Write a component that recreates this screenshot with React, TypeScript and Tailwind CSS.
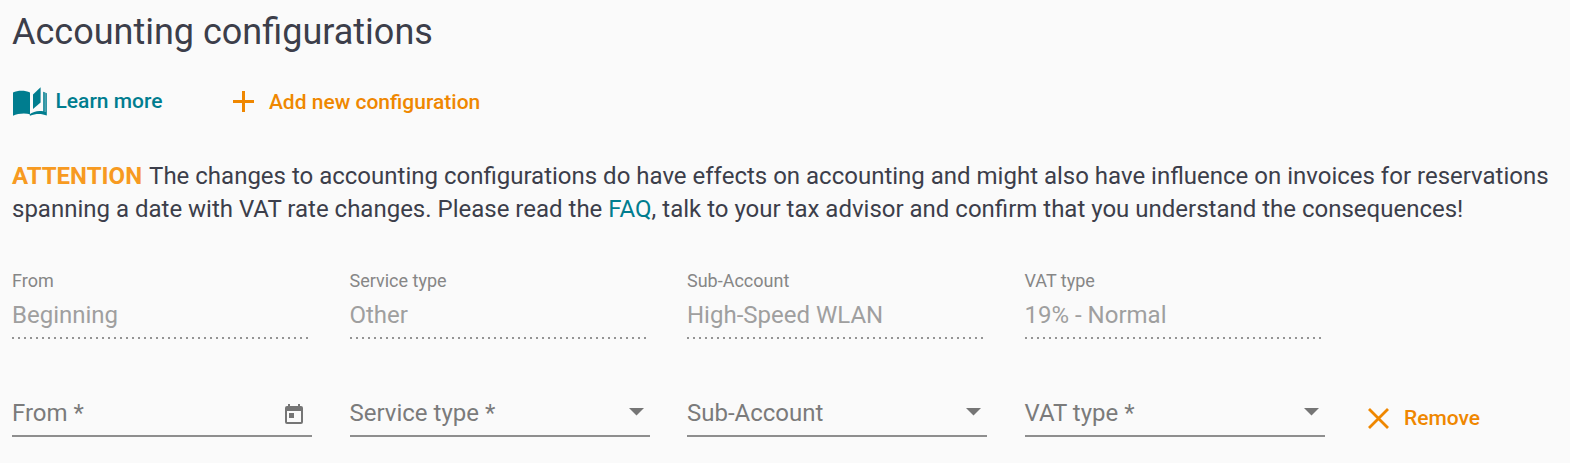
import React from "react";

const fields = [
  { label: "From", value: "Beginning", placeholder: "From *", date: true },
  { label: "Service type", value: "Other", placeholder: "Service type *", date: false },
  { label: "Sub-Account", value: "High-Speed WLAN", placeholder: "Sub-Account", date: false },
  { label: "VAT type", value: "19% - Normal", placeholder: "VAT type *", date: false },
];

function BookIcon() {
  return (
    <svg className="h-[30px] w-[34px]" viewBox="0 0 34 30" fill="currentColor">
      <path d="M0 5.6C4.5 3.2 12.5 3.2 17 5.6V27.2C12 26 4.5 26.4 0 28.8Z" />
      <path d="M20 7.6 27.6 0.2V15.4L20 22Z" />
      <path d="M30.2 4.7 31.8 5.2V25H32.3V5.5L33.8 6.2V28.6C29 26.4 22.5 26.4 17 28.8L16.6 27.2C20 24.6 25 23.2 30.2 24.3Z" />
    </svg>
  );
}

function CalendarIcon() {
  return (
    <svg className="h-[20px] w-[18px]" viewBox="0 0 18 20" fill="#757575">
      <path fillRule="evenodd" d="M3 0h2v2h8V0h2v2h1a2 2 0 0 1 2 2v14a2 2 0 0 1-2 2H2a2 2 0 0 1-2-2V4a2 2 0 0 1 2-2h1ZM2 7v11h14V7Z" />
      <path d="M4 9h5v5H4Z" />
    </svg>
  );
}

export default function App() {
  return (
    <main className="h-[463px] w-[1570px] overflow-hidden bg-[#fafafa] pl-3 pt-[11px] font-['Roboto',sans-serif] text-[#3c3e4a]">
      <h1 className="text-[36px] leading-[42px]">Accounting configurations</h1>

      <div className="mt-[33px] flex h-8 items-start text-[21px] font-medium leading-[30px]">
        <a className="flex text-[#007d8f]">
          <span className="mr-[8.5px] pl-px pt-px"><BookIcon /></span>
          Learn more
        </a>
        <button className="ml-[70.5px] flex items-start pt-px font-medium text-[#ef8700]">
          <svg className="mr-[15px] mt-[4px] h-[21px] w-[21px]" viewBox="0 0 21 21" fill="currentColor">
            <path d="M9 0h3v9h9v3h-9v9H9v-9H0V9h9Z" />
          </svg>
          Add new configuration
        </button>
      </div>

      <p className="mt-[42px] text-[24px] leading-[33px]">
        <strong className="mr-[1.5px] font-bold text-[#f79a21]">ATTENTION</strong> The changes to accounting configurations do have effects on accounting and might also have influence on invoices for reservations
        <br />
        spanning a date with VAT rate changes. Please read the <a className="text-[#007d8f]">FAQ</a>, talk to your tax advisor and confirm that you understand the consequences!
      </p>

      <div className="mt-[43px] flex gap-[37.5px]">
        {fields.map((f) => (
          <div key={f.label} className="w-[300px]">
            <div className="text-[18px] leading-[24px] text-[#868686]">{f.label}</div>
            <div className="mt-[6px] text-[24px] leading-[32px] text-[#9f9f9f]">{f.value}</div>
            <div className="mt-[6px] h-[2px] w-[297px] bg-[repeating-linear-gradient(to_right,#949494_0_2px,transparent_2px_6px)]" />
          </div>
        ))}
      </div>

      <div className="mt-[58px] flex">
        <div className="flex gap-[37.5px]">
          {fields.map((f) => (
            <div key={f.label} className="flex h-10 w-[300px] items-start justify-between border-b-2 border-[#8e8e8e] text-[24px] leading-[32px] text-[#7b7b7b]">
              <span>{f.placeholder}</span>
              {f.date ? (
                <span className="mr-[9px] mt-[7px]"><CalendarIcon /></span>
              ) : (
                <svg className="mr-[6px] mt-[11px] h-[7.5px] w-[15px]" viewBox="0 0 15 7.5" fill="#757575">
                  <path d="M0 0h15L7.5 7.5Z" />
                </svg>
              )}
            </div>
          ))}
        </div>
        <button className="ml-[43px] mt-[6px] flex h-[30px] items-start text-[21px] font-medium leading-[30px] text-[#ef8700]">
          <svg className="mr-[15.5px] mt-[5px] h-[21px] w-[21px]" viewBox="0 0 21 21" fill="none" stroke="currentColor" strokeWidth="2.8">
            <path d="M1 1 20 20M20 1 1 20" />
          </svg>
          Remove
        </button>
      </div>
    </main>
  );
}
